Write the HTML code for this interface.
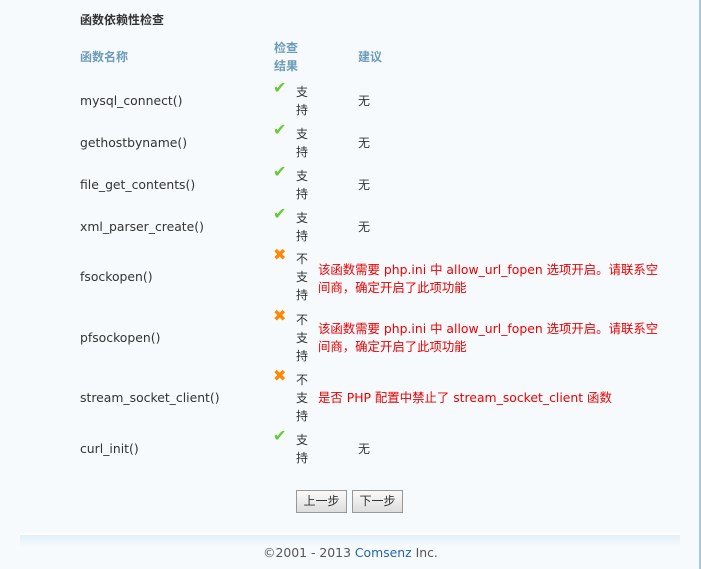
<!DOCTYPE html>
<html><head><meta charset="utf-8"><style>
body{margin:0;width:701px;height:569px;background:#f6fafd;position:relative;overflow:hidden;font-family:"DejaVu Sans","Noto Sans CJK SC",sans-serif;font-size:12px;color:#333}
.a{position:absolute;white-space:nowrap;line-height:18px}
.n{font-size:12.4px}
.h{color:#6b9bb8;font-weight:bold}
.r{color:#e00}
.btn{position:absolute;top:490px;width:49px;height:21px;border:1px solid #999;background:linear-gradient(#fafafa,#ddd);font-size:12px;line-height:21px;text-align:center;color:#333}
.ck{color:#6c3;font-size:16px;font-weight:bold}
.x{color:#f80;font-size:16px;font-weight:bold}
</style></head><body>
<div style="position:absolute;right:0;top:0;width:2px;height:569px;background:#a8c8dc"></div>
<div class="a" style="left:80px;top:11px;font-weight:bold;color:#333">函数依赖性检查</div>
<div class="a h" style="left:80px;top:48px">函数名称</div>
<div class="a h" style="left:274px;top:39px">检查<br>结果</div>
<div class="a h" style="left:358px;top:48px">建议</div>

<div class="a n" style="left:80px;top:92px">mysql_connect()</div>
<div class="a n" style="left:80px;top:134px">gethostbyname()</div>
<div class="a n" style="left:80px;top:176px">file_get_contents()</div>
<div class="a n" style="left:80px;top:218px">xml_parser_create()</div>
<div class="a n" style="left:80px;top:268px">fsockopen()</div>
<div class="a n" style="left:80px;top:329px">pfsockopen()</div>
<div class="a n" style="left:80px;top:389px">stream_socket_client()</div>
<div class="a n" style="left:80px;top:440px">curl_init()</div>

<div class="a ck" style="left:273px;top:79px">✔</div>
<div class="a" style="left:296px;top:83px">支<br>持</div>
<div class="a" style="left:358px;top:92px">无</div>
<div class="a ck" style="left:273px;top:121px">✔</div>
<div class="a" style="left:296px;top:125px">支<br>持</div>
<div class="a" style="left:358px;top:134px">无</div>
<div class="a ck" style="left:273px;top:163px">✔</div>
<div class="a" style="left:296px;top:167px">支<br>持</div>
<div class="a" style="left:358px;top:176px">无</div>
<div class="a ck" style="left:273px;top:205px">✔</div>
<div class="a" style="left:296px;top:209px">支<br>持</div>
<div class="a" style="left:358px;top:218px">无</div>

<div class="a x" style="left:273px;top:246px">✖</div>
<div class="a" style="left:296px;top:250px">不<br>支<br>持</div>
<div class="a r n" style="left:318px;top:261px">该函数需要 php.ini 中 allow_url_fopen 选项开启。请联系空<br>间商，确定开启了此项功能</div>
<div class="a x" style="left:273px;top:307px">✖</div>
<div class="a" style="left:296px;top:311px">不<br>支<br>持</div>
<div class="a r n" style="left:318px;top:320px">该函数需要 php.ini 中 allow_url_fopen 选项开启。请联系空<br>间商，确定开启了此项功能</div>
<div class="a x" style="left:273px;top:367px">✖</div>
<div class="a" style="left:296px;top:371px">不<br>支<br>持</div>
<div class="a r n" style="left:318px;top:389px">是否 PHP 配置中禁止了 stream_socket_client 函数</div>

<div class="a ck" style="left:273px;top:427px">✔</div>
<div class="a" style="left:296px;top:431px">支<br>持</div>
<div class="a" style="left:358px;top:440px">无</div>

<div class="btn" style="left:296px">上一步</div>
<div class="btn" style="left:352px">下一步</div>

<div style="position:absolute;left:20px;top:533px;width:660px;height:2px;background:#fff"></div>
<div style="position:absolute;left:20px;top:535px;width:660px;height:12px;background:linear-gradient(#e3eef6,#f6fafd)"></div>
<div class="a n" style="left:0;width:701px;text-align:center;top:544px;color:#555">©2001 - 2013 <span style="color:#2266aa">Comsenz</span> Inc.</div>
</body></html>
